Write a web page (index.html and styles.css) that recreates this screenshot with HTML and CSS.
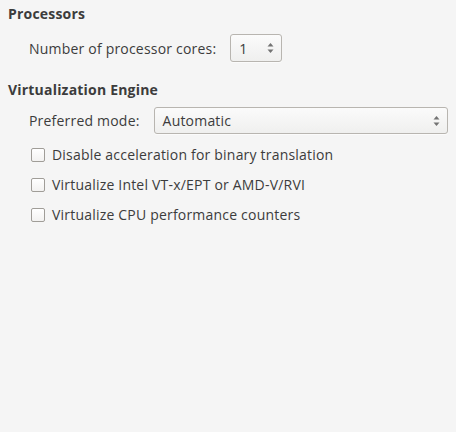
FILE: index.html
```html
<!DOCTYPE html>
<html>
<head>
<meta charset="utf-8">
<link rel="stylesheet" href="styles.css">
</head>
<body>
<div class="page">
  <section class="group">
    <h2 class="heading">Processors</h2>
    <div class="row row-cores">
      <span class="label">Number of processor cores:</span>
      <div class="spin">
        <span class="spin-value">1</span>
        <svg class="arrows" width="7" height="12" viewBox="0 0 7 12"><path d="M3.5 1 L6.5 4.5 L0.5 4.5 Z" fill="#737373"/><path d="M3.5 11 L6.5 7.5 L0.5 7.5 Z" fill="#737373"/></svg>
      </div>
    </div>
  </section>
  <section class="group">
    <h2 class="heading">Virtualization Engine</h2>
    <div class="row row-mode">
      <span class="label">Preferred mode:</span>
      <div class="combo">
        <span class="combo-value">Automatic</span>
        <svg class="arrows" width="7" height="12" viewBox="0 0 7 12"><path d="M3.5 1 L6.5 4.5 L0.5 4.5 Z" fill="#737373"/><path d="M3.5 11 L6.5 7.5 L0.5 7.5 Z" fill="#737373"/></svg>
      </div>
    </div>
    <div class="checks">
      <label class="check"><span class="box"></span><span>Disable acceleration for binary translation</span></label>
      <label class="check"><span class="box"></span><span>Virtualize Intel VT-x/EPT or AMD-V/RVI</span></label>
      <label class="check"><span class="box"></span><span>Virtualize CPU performance counters</span></label>
    </div>
  </section>
</div>
</body>
</html>
```
FILE: styles.css
```css
html, body {
  margin: 0;
  padding: 0;
  background: #f5f5f5;
}
body {
  font-family: "Open Sans", "DejaVu Sans", sans-serif;
  font-size: 14px;
  letter-spacing: 0.2px;
  color: #3c3c3c;
  width: 456px;
  height: 432px;
}
.page {
  padding: 5px 8px 0 8px;
}
.heading {
  margin: 0;
  font-size: 14px;
  font-weight: bold;
  line-height: 18px;
  color: #3c3c3c;
}
.row {
  display: flex;
  align-items: center;
  padding-left: 21px;
}
.row-cores {
  margin-top: 11px;
  gap: 14px;
}
.row-mode {
  margin-top: 8px;
  gap: 14px;
}
.group + .group {
  margin-top: 19px;
}
.spin, .combo {
  box-sizing: border-box;
  height: 28px;
  border: 1px solid #b8b5b0;
  border-radius: 3px;
  background: linear-gradient(#fbfbfb, #efefee);
  display: flex;
  align-items: center;
  justify-content: space-between;
  padding: 0 7px 0 8px;
  box-shadow: 0 1px 0 rgba(255,255,255,0.6);
}
.spin {
  width: 52px;
}
.combo {
  flex: 1;
  height: 27px;
}
.spin-value, .combo-value {
  color: #3c3c3c;
}
.checks {
  display: flex;
  flex-direction: column;
  gap: 12px;
  margin-top: 12px;
  padding-left: 23px;
}
.check {
  display: flex;
  align-items: center;
  gap: 7px;
  line-height: 18px;
}
.box {
  box-sizing: border-box;
  width: 14px;
  height: 14px;
  border: 1px solid #a09d98;
  border-radius: 2px;
  background: linear-gradient(#ffffff, #f3f2f1);
}
```
